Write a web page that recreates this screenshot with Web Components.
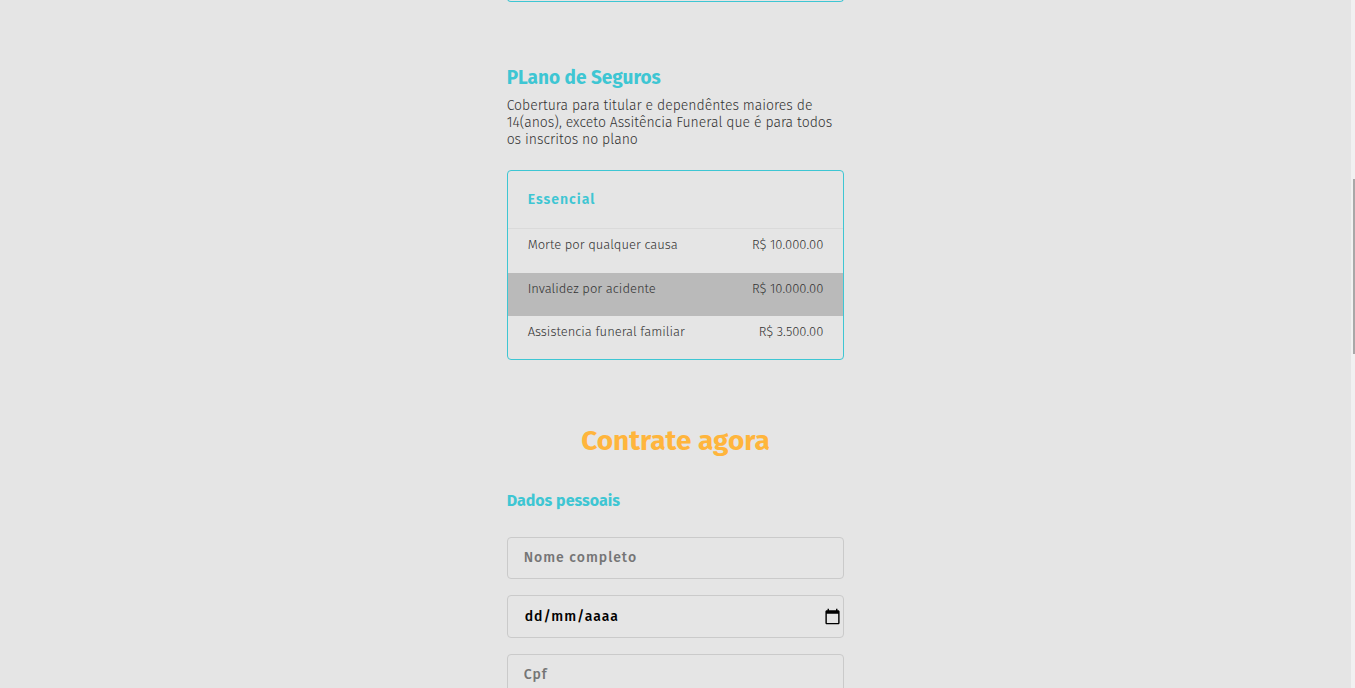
<!DOCTYPE html>
<html lang="pt-BR">
<head>
<meta charset="utf-8">
<title>Plano de Seguros</title>
<style>
  body {
    margin: 0;
    background: #e5e5e5;
    font-family: "Fira Sans", Roboto, "Noto Sans", sans-serif;
    color: #333;
    --teal: #3ec6d3;
    --amber: #ffb53c;
    --line: #cacaca;
  }
</style>
</head>
<body>
<scroll-page>
  <card-end></card-end>
  <plan-intro>
    <span slot="title">PLano de Seguros</span>
    Cobertura para titular e dependêntes maiores de 14(anos), exceto Assitência Funeral que é para todos os inscritos no plano
  </plan-intro>
  <coverage-table></coverage-table>
  <signup-form>
    <span slot="title">Contrate agora</span>
    <span slot="section">Dados pessoais</span>
    <form-field label="Nome completo"></form-field>
    <form-field label="Data de nascimento" kind="date"></form-field>
    <form-field label="Cpf"></form-field>
  </signup-form>
</scroll-page>

<script>
const define = (name, html, setup) => {
  const template = document.createElement('template');
  template.innerHTML = html;
  customElements.define(name, class extends HTMLElement {
    constructor() {
      super();
      this.attachShadow({ mode: 'open' }).append(template.content.cloneNode(true));
    }
    connectedCallback() {
      if (setup) setup(this, this.shadowRoot);
    }
  });
};

define('form-field', `
  <style>
    :host { display: block; }
    .box {
      display: flex; align-items: center; box-sizing: border-box; height: 42px;
      border: 1px solid var(--line); border-radius: 4px; padding: 0 2px 0 16px;
    }
    :host([kind=date]) .box { height: 43px; padding-left: 17px; }
    input {
      flex: 1; min-width: 0; margin: 0; padding: 0; border: 0; outline: 0; background: none;
      font: 500 14px/20px "Fira Sans", Roboto, "Noto Sans", sans-serif;
      letter-spacing: 1px; color: #000;
    }
    input::placeholder { color: #757575; opacity: 1; }
    :host([kind=date]) input::placeholder { color: #000; }
    button { display: none; padding: 0; border: 0; background: none; color: #000; }
    :host([kind=date]) button { display: block; }
    svg { display: block; }
  </style>
  <div class="box">
    <input type="text">
    <button type="button" aria-label="Abrir calendário">
      <svg width="17" height="17" viewBox="0 0 24 24" fill="currentColor">
        <path d="M20 3h-1V1h-2v2H7V1H5v2H4c-1.1 0-2 .9-2 2v16c0 1.1.9 2 2 2h16c1.1 0 2-.9 2-2V5c0-1.1-.9-2-2-2zm0 18H4V8h16v13z"/>
      </svg>
    </button>
  </div>`, (host, root) => {
  const input = root.querySelector('input');
  const label = host.getAttribute('label');
  input.placeholder = host.getAttribute('kind') === 'date' ? 'dd/mm/aaaa' : label;
  input.setAttribute('aria-label', label);
});

define('signup-form', `
  <style>
    :host { display: block; }
    h2 { margin: 64px 0 0; text-align: center; font-size: 28px; line-height: 34px; font-weight: 700; color: var(--amber); }
    h3 { margin: 33px 0 27px; font-size: 16px; line-height: 19px; font-weight: 700; color: var(--teal); }
    form { display: grid; gap: 16px; }
  </style>
  <h2><slot name="title"></slot></h2>
  <h3><slot name="section"></slot></h3>
  <form><slot></slot></form>`);

define('coverage-table', `
  <style>
    :host { display: block; border: 1px solid var(--teal); border-radius: 4px; }
    table { width: 100%; border-collapse: collapse; font-size: 13px; line-height: 16px; font-weight: 300; }
    thead th {
      padding: 20px; border-bottom: 1px solid #dadada; text-align: left;
      font-size: 14px; line-height: 17px; font-weight: 600; letter-spacing: 1px; color: var(--teal);
    }
    tbody th, tbody td { padding: 8px 20px 19px; vertical-align: top; font-weight: 300; text-align: left; white-space: nowrap; }
    tbody td { text-align: right; }
    tbody tr:first-child > * { padding-bottom: 20px; }
    tbody tr:nth-child(even) { background: #bababa; }
  </style>
  <table>
    <thead><tr><th colspan="2">Essencial</th></tr></thead>
    <tbody>
      <tr><th scope="row">Morte por qualquer causa</th><td>R$ 10.000.00</td></tr>
      <tr><th scope="row">Invalidez por acidente</th><td>R$ 10.000.00</td></tr>
      <tr><th scope="row">Assistencia funeral familiar</th><td>R$ 3.500.00</td></tr>
    </tbody>
  </table>`);

define('plan-intro', `
  <style>
    :host { display: block; margin: 64px 0 22px; }
    h2 { margin: 0 0 8px; font-size: 19px; line-height: 23px; font-weight: 700; color: var(--teal); }
    p { margin: 0; font-size: 14px; line-height: 17px; font-weight: 300; }
  </style>
  <h2><slot name="title"></slot></h2>
  <p><slot></slot></p>`);

/* Only the foot of the card above is in view. */
define('card-end', `
  <style>
    :host {
      display: block; height: 9px; margin-top: -8px; border: 1px solid var(--teal);
      border-top: 0; border-radius: 0 0 4px 4px;
    }
  </style>`);

define('scroll-page', `
  <style>
    :host { display: flex; height: 100vh; overflow: hidden; }
    main { flex: 1; min-width: 0; overflow: hidden; }
    .column { width: 25%; min-width: 337px; margin: 0 auto; }
    .track { width: 4px; background: #f1f1f1; display: grid; grid-template-rows: 179fr 175fr 334fr; }
    .thumb { grid-row: 2; width: 2px; margin-left: 2px; background: #a8a8a8; }
  </style>
  <main><div class="column"><slot></slot></div></main>
  <div class="track" aria-hidden="true"><div class="thumb"></div></div>`);
</script>
</body>
</html>
